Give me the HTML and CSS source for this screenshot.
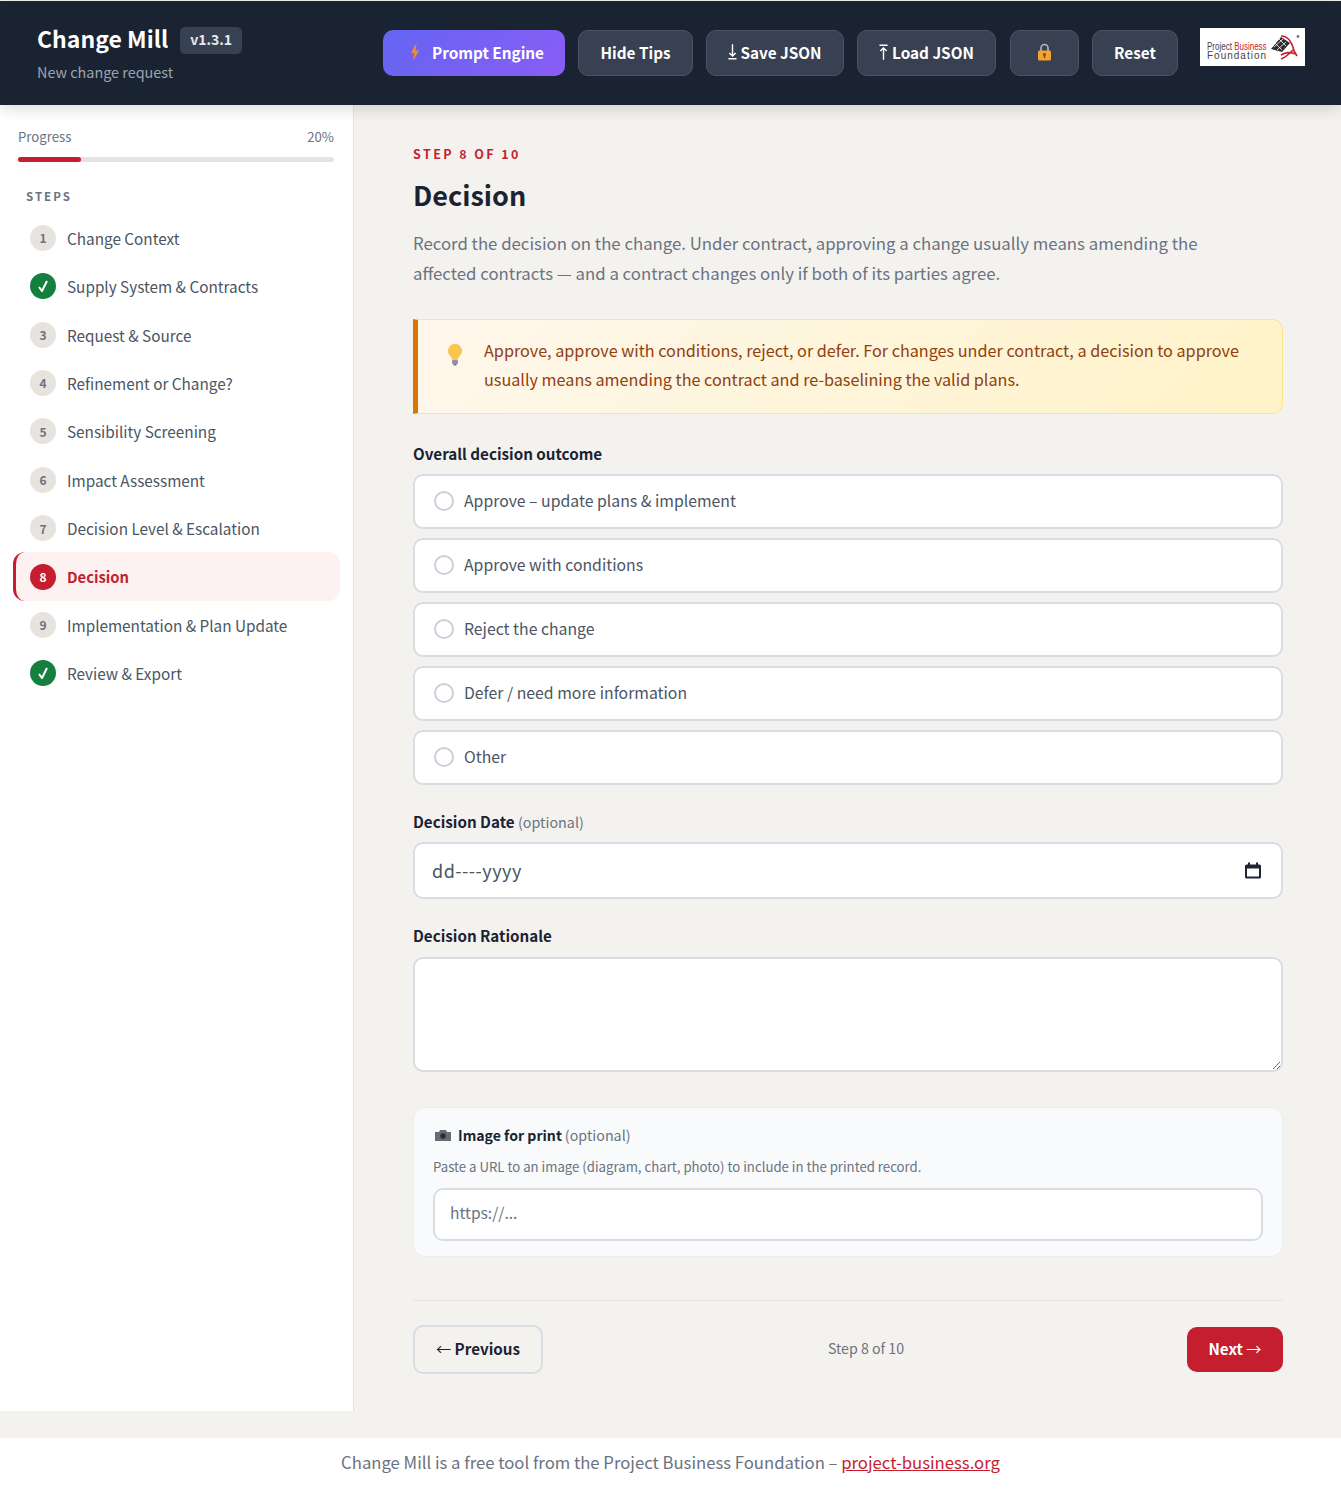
FILE: index.html
```html
<!DOCTYPE html>
<html lang="en">
<head>
    <meta charset="UTF-8">
    <meta name="viewport" content="width=device-width, initial-scale=1.0">
    <title>Change Mill</title>
    <link rel="stylesheet" href="styles.css">
</head>
<body>
    <!-- top bar -->
    <header class="topbar">
        <div class="brand">
            <div class="brand-row">
                <h1 class="brand-title">Change Mill</h1>
                <span class="version">v1.3.1</span>
            </div>
            <div class="brand-sub">New change request</div>
        </div>
        <nav class="actions">
            <button class="btn btn-prompt">
                <svg class="bolt" viewBox="0 0 10 18"><path d="M6.5 0 1 10h3.2L3 18l6-10.5H5.6z" fill="#f08a3c"/></svg>
                Prompt Engine
            </button>
            <button class="btn btn-tips">Hide Tips</button>
            <button class="btn btn-save">
                <svg class="arrow" viewBox="0 0 10 17"><path d="M5 0v13M1.500 9.500 5 13l3.500-3.500M0.500 16h9" fill="none" stroke="#fff" stroke-width="1.600"/></svg>
                Save JSON
            </button>
            <button class="btn btn-load">
                <svg class="arrow" viewBox="0 0 10 17"><path d="M5 17V4M1.500 7.500 5 4l3.500 3.500M0.500 1h9" fill="none" stroke="#fff" stroke-width="1.600"/></svg>
                Load JSON
            </button>
            <button class="btn btn-lock" aria-label="Lock">
                <svg viewBox="0 0 14 18" width="15" height="18">
                    <path d="M3.500 8V5a3.500 3.500 0 0 1 7 0v3" fill="none" stroke="#b4b8bd" stroke-width="1.600"/>
                    <rect x="0.500" y="7.500" width="13" height="10" rx="1.500" fill="#f3a32f"/>
                    <circle cx="7" cy="11.500" r="1.500" fill="#7a4a12"/>
                    <rect x="6.300" y="11.500" width="1.400" height="3.500" fill="#7a4a12"/>
                </svg>
            </button>
            <button class="btn btn-reset">Reset</button>
        </nav>
        <div class="logo">
            <div class="logo-text">
                <div class="logo-line1">Project <span>Business</span></div>
                <div class="logo-line2">Foundation</div>
            </div>
            <svg class="logo-mark" viewBox="0 0 30 27" width="30" height="27">
                <path d="M1 15 11 3l9 6-8 9z" fill="#2e2e2e"/>
                <path d="M4 13l9-8M7 16l9-8M5 9l7 7M9 5l7 7" stroke="#fff" stroke-width="0.800"/>
                <path d="M11 2c7 0 11 6 13 15M24 17l3 5M11 21c5-3 8-3 15-1M11 25c4-1 7-4 12-9" fill="none" stroke="#c8202f" stroke-width="1.700"/>
                <circle cx="28" cy="2.500" r="1.400" fill="#777"/>
            </svg>
        </div>
    </header>

    <div class="layout">
        <!-- sidebar -->
        <aside class="sidebar">
            <div class="progress-head"><span>Progress</span><span>20%</span></div>
            <div class="progress-bar"><div class="progress-fill"></div></div>
            <div class="steps-title">STEPS</div>
            <ul class="steps">
                <li class="step"><span class="step-num">1</span>Change Context</li>
                <li class="step"><span class="step-num done"><svg viewBox="0 0 10 12" width="10" height="12"><path d="M1 7l3 4 5-10" fill="none" stroke="#fff" stroke-width="2"/></svg></span>Supply System &amp; Contracts</li>
                <li class="step"><span class="step-num">3</span>Request &amp; Source</li>
                <li class="step"><span class="step-num">4</span>Refinement or Change?</li>
                <li class="step"><span class="step-num">5</span>Sensibility Screening</li>
                <li class="step"><span class="step-num">6</span>Impact Assessment</li>
                <li class="step"><span class="step-num">7</span>Decision Level &amp; Escalation</li>
                <li class="step active"><span class="step-num">8</span>Decision</li>
                <li class="step"><span class="step-num">9</span>Implementation &amp; Plan Update</li>
                <li class="step"><span class="step-num done"><svg viewBox="0 0 10 12" width="10" height="12"><path d="M1 7l3 4 5-10" fill="none" stroke="#fff" stroke-width="2"/></svg></span>Review &amp; Export</li>
            </ul>
        </aside>

        <!-- main form -->
        <main class="main">
            <div class="eyebrow">STEP 8 OF 10</div>
            <h2 class="page-title">Decision</h2>
            <p class="intro">Record the decision on the change. Under contract, approving a change usually means amending the affected contracts — and a contract changes only if both of its parties agree.</p>

            <div class="tip">
                <svg class="tip-icon" viewBox="0 0 16 24" width="16" height="24">
                    <path d="M8 1a7 7 0 0 0-4.200 12.600c1 .9 1.200 2 1.200 3.400h6c0-1.400.2-2.500 1.200-3.400A7 7 0 0 0 8 1z" fill="#fbc64d"/>
                    <rect x="5" y="17" width="6" height="4" rx="1" fill="#9a8fa8"/>
                    <rect x="6.200" y="21" width="3.600" height="1.600" rx="0.800" fill="#7d7289"/>
                </svg>
                <p>Approve, approve with conditions, reject, or defer. For changes under contract, a decision to approve usually means amending the contract and re-baselining the valid plans.</p>
            </div>

            <div class="field-label">Overall decision outcome</div>
            <div class="options">
                <label class="option"><input type="radio" name="outcome"><span>Approve – update plans &amp; implement</span></label>
                <label class="option"><input type="radio" name="outcome"><span>Approve with conditions</span></label>
                <label class="option"><input type="radio" name="outcome"><span>Reject the change</span></label>
                <label class="option"><input type="radio" name="outcome"><span>Defer / need more information</span></label>
                <label class="option"><input type="radio" name="outcome"><span>Other</span></label>
            </div>

            <div class="field-label label-date">Decision Date <span class="optional">(optional)</span></div>
            <div class="date-input">
                <span>dd----yyyy</span>
                <svg viewBox="0 0 16 16" width="16" height="17">
                    <path d="M3 0h2v2h6V0h2v2h1.500A1.500 1.500 0 0 1 16 3.500v11a1.500 1.500 0 0 1-1.500 1.500h-13A1.500 1.500 0 0 1 0 14.500v-11A1.500 1.500 0 0 1 1.500 2H3zM2 6v8h12V6z" fill="#1f2733"/>
                </svg>
            </div>

            <div class="field-label label-rationale">Decision Rationale</div>
            <textarea class="rationale"></textarea>

            <div class="image-box">
                <div class="image-title">
                    <svg viewBox="0 0 16 12" width="16" height="12">
                        <path d="M0 3h4l1-2h6l1 2h4v9H0z" fill="#6a6a76"/>
                        <circle cx="8" cy="7" r="2.800" fill="#2d2d36"/>
                    </svg>
                    <b>Image for print</b> <span class="optional">(optional)</span>
                </div>
                <div class="image-desc">Paste a URL to an image (diagram, chart, photo) to include in the printed record.</div>
                <input class="image-url" type="text" placeholder="https://...">
            </div>

            <div class="pager">
                <button class="btn-prev"><span class="pager-arrow">←</span> Previous</button>
                <span class="pager-text">Step 8 of 10</span>
                <button class="btn-next">Next <span class="pager-arrow">→</span></button>
            </div>
        </main>
    </div>

    <footer class="footer">
        Change Mill is a free tool from the Project Business Foundation – <a href="#">project-business.org</a>
    </footer>
</body>
</html>
```

FILE: styles.css
```css
* {
    box-sizing: border-box;
}
body {
    margin: 0;
    padding-top: 1px;
    background-color: #f4f2ef;
    font-family: "Noto Sans CJK JP", "Noto Sans", sans-serif;
    color: #1a2332;
}

/* top bar */
.topbar {
    display: flex;
    align-items: flex-start;
    height: 104px;
    padding: 0 36px 0 37px;
    background-color: #1a2332;
    box-shadow: 0 4px 14px rgba(0, 0, 0, 0.14);
    position: relative;
}
.brand {
    width: 346px;
    padding-top: 22px;
}
.brand-row {
    display: flex;
    align-items: center;
    gap: 12px;
}
.brand-title {
    margin: 0;
    padding-bottom: 5px;
    font-size: 23px;
    line-height: 30px;
    font-weight: 700;
    color: #fff;
}
.version {
    padding: 0 10px 2px;
    font-size: 14px;
    line-height: 25px;
    font-weight: 700;
    color: #e5e7eb;
    background-color: #374151;
    border-radius: 5px;
}
.brand-sub {
    margin-top: 3px;
    font-size: 14.4px;
    line-height: 22px;
    color: #9ca3af;
}
.actions {
    display: flex;
    gap: 13px;
    padding-top: 29px;
}
.btn {
    display: flex;
    align-items: center;
    justify-content: center;
    height: 46px;
    padding: 0 0 2px;
    border: 1px solid #4b5563;
    border-radius: 10px;
    background-color: #374151;
    color: #fff;
    font-family: inherit;
    font-size: 15.3px;
    font-weight: 700;
    cursor: pointer;
}
.btn-prompt {
    width: 182px;
    gap: 12px;
    padding-left: 6px;
    border: none;
    background: linear-gradient(135deg, #6366f1, #8b5cf6);
}
.bolt {
    width: 10px;
    height: 18px;
}
.btn-tips { width: 115px; }
.btn-save { width: 138px; gap: 3px; }
.btn-load { width: 139px; gap: 4px; }
.btn-lock { width: 69px; margin-left: 1px; }
.btn-reset { width: 86px; }
.arrow {
    width: 9px;
    height: 16px;
}
.logo {
    display: flex;
    align-items: center;
    justify-content: space-between;
    width: 105px;
    height: 38px;
    margin: 27px 0 0 22px;
    padding: 0 5px 0 7px;
    background-color: #fff;
}
.logo-text {
    padding-top: 7px;
    font-family: "Liberation Sans", sans-serif;
}
.logo-line1 {
    font-size: 8px;
    line-height: 9px;
    color: #444;
    white-space: nowrap;
    transform: scaleY(1.3);
}
.logo-line1 span {
    color: #c8202f;
}
.logo-line2 {
    font-size: 10px;
    line-height: 9px;
    letter-spacing: 1px;
    color: #444;
}

/* page layout */
.layout {
    display: flex;
    height: 1306px;
}
.sidebar {
    width: 354px;
    padding: 22px 19px 0 18px;
    background-color: #fff;
    border-right: 1px solid #e8e5e1;
}
.progress-head {
    display: flex;
    justify-content: space-between;
    font-size: 13.2px;
    line-height: 20px;
    color: #6b7280;
}
.progress-bar {
    height: 5px;
    margin-top: 10px;
    background-color: #e7e3df;
    border-radius: 3px;
}
.progress-fill {
    width: 20%;
    height: 100%;
    background-color: #c41e2f;
    border-radius: 3px;
}
.steps-title {
    margin: 26px 0 0 8px;
    font-size: 11.5px;
    line-height: 16px;
    font-weight: 700;
    letter-spacing: 2px;
    color: #6b7280;
}
.steps {
    list-style: none;
    margin: 9.6px 0 0 -5px;
    padding: 0;
}
.step {
    display: flex;
    align-items: center;
    gap: 11px;
    width: 327px;
    height: 48.4px;
    padding-left: 17px;
    font-size: 15.3px;
    color: #4b5563;
    border-radius: 12px;
}
.step-num {
    display: flex;
    align-items: center;
    justify-content: center;
    flex: none;
    width: 26px;
    height: 26px;
    border-radius: 50%;
    background-color: #e7e3df;
    color: #6b7280;
    font-size: 12px;
    font-weight: 700;
}
.step-num.done {
    background-color: #15803d;
}
.step.active {
    background-color: #fdf1f1;
    border-left: 3px solid #c41e2f;
    padding-left: 14px;
    color: #c41e2f;
    font-size: 14.8px;
    font-weight: 700;
}
.step.active .step-num {
    background-color: #c41e2f;
    color: #fff;
}

/* main form */
.main {
    flex: 1;
    padding: 39px 58px 0 59px;
}
.eyebrow {
    font-size: 12.5px;
    line-height: 20px;
    font-weight: 700;
    letter-spacing: 2.4px;
    color: #c41e2f;
}
.page-title {
    margin: 9px 0 0;
    font-size: 27px;
    line-height: 44px;
    font-weight: 700;
}
.intro {
    max-width: 800px;
    margin: 11px 0 0;
    font-size: 16.8px;
    line-height: 30px;
    color: #6b7280;
}
.tip {
    display: flex;
    gap: 21px;
    height: 95px;
    margin-top: 31px;
    padding: 16px 24px 0 29px;
    background: linear-gradient(135deg, #fff7ed, #fef3c7);
    border: 1px solid #fde68a;
    border-left: 5px solid #d97706;
    border-radius: 0 10px 10px 0;
}
.tip-icon {
    flex: none;
    margin-top: 7px;
}
.tip p {
    margin: 0;
    font-size: 16.2px;
    line-height: 29px;
    color: #92400e;
}
.field-label {
    margin-top: 28px;
    font-size: 15.2px;
    line-height: 22px;
    font-weight: 700;
}
.optional {
    font-weight: 400;
    color: #6b7280;
    font-size: 14.3px;
}
.options {
    display: flex;
    flex-direction: column;
    gap: 9px;
    margin-top: 10px;
}
.option {
    display: flex;
    align-items: center;
    gap: 10px;
    height: 55px;
    padding-left: 19px;
    background-color: #fff;
    border: 2px solid #d8dce3;
    border-radius: 10px;
    font-size: 15.8px;
    color: #4b5563;
}
.option span {
    margin-bottom: 3px;
}
.option input {
    appearance: none;
    width: 20px;
    height: 20px;
    margin: 0 0 1px;
    background-color: #fff;
    border: 2px solid #c9ced7;
    border-radius: 50%;
}
.label-date {
    margin-top: 25px;
}
.date-input {
    display: flex;
    align-items: center;
    justify-content: space-between;
    height: 57px;
    margin-top: 9px;
    padding: 0 20px 0 17px;
    background-color: #fff;
    border: 2px solid #d8dce3;
    border-radius: 10px;
    font-size: 18px;
    letter-spacing: 0.5px;
    color: #4b5563;
}
.date-input span {
    margin-bottom: 2px;
}
.label-rationale {
    margin-top: 25px;
}
.rationale {
    display: block;
    width: 100%;
    height: 115px;
    margin-top: 11px;
    background-color: #fff;
    border: 2px solid #d8dce3;
    border-radius: 10px;
}
.image-box {
    height: 150px;
    margin-top: 35px;
    padding: 16px 19px 0;
    background-color: #f8fafb;
    border: 1px solid #e8edf1;
    border-radius: 12px;
}
.image-title {
    display: flex;
    align-items: center;
    gap: 3px;
    margin-left: 2px;
    font-size: 14.1px;
    line-height: 22px;
}
.image-title svg {
    margin-right: 4px;
}
.image-desc {
    margin-top: 11px;
    font-size: 13.2px;
    line-height: 20px;
    color: #6b7280;
}
.image-url {
    display: block;
    width: 100%;
    height: 53px;
    margin-top: 11px;
    padding: 0 15px 6px;
    background-color: #fff;
    border: 2px solid #d8dce3;
    border-radius: 10px;
    font-family: inherit;
    font-size: 15.6px;
}
.image-url::placeholder {
    color: #6b7280;
    opacity: 1;
}
.pager {
    display: flex;
    align-items: center;
    justify-content: space-between;
    height: 74px;
    margin-top: 43px;
    padding-top: 24px;
    border-top: 1px solid #e3e1de;
}
.btn-prev {
    width: 130px;
    height: 49px;
    padding: 0 0 3px;
    background-color: transparent;
    border: 2px solid #d8dce3;
    border-radius: 10px;
    color: #1a2332;
    font-family: inherit;
    font-size: 15.2px;
    font-weight: 700;
    cursor: pointer;
}
.pager-arrow {
    font-weight: 400;
}
.pager-text {
    margin: 0 0 4px 2px;
    font-size: 14.2px;
    color: #6b7280;
}
.btn-next {
    width: 96px;
    height: 45px;
    padding: 0 0 3px;
    background-color: #c41e2f;
    border: none;
    border-radius: 10px;
    color: #fff;
    font-family: inherit;
    font-size: 15.2px;
    font-weight: 700;
    cursor: pointer;
}

/* footer */
.footer {
    margin-top: 27px;
    height: 62px;
    padding-top: 11px;
    background-color: #fff;
    text-align: center;
    font-size: 16.7px;
    line-height: 26px;
    color: #6b7280;
}
.footer a {
    color: #c41e2f;
}
```
